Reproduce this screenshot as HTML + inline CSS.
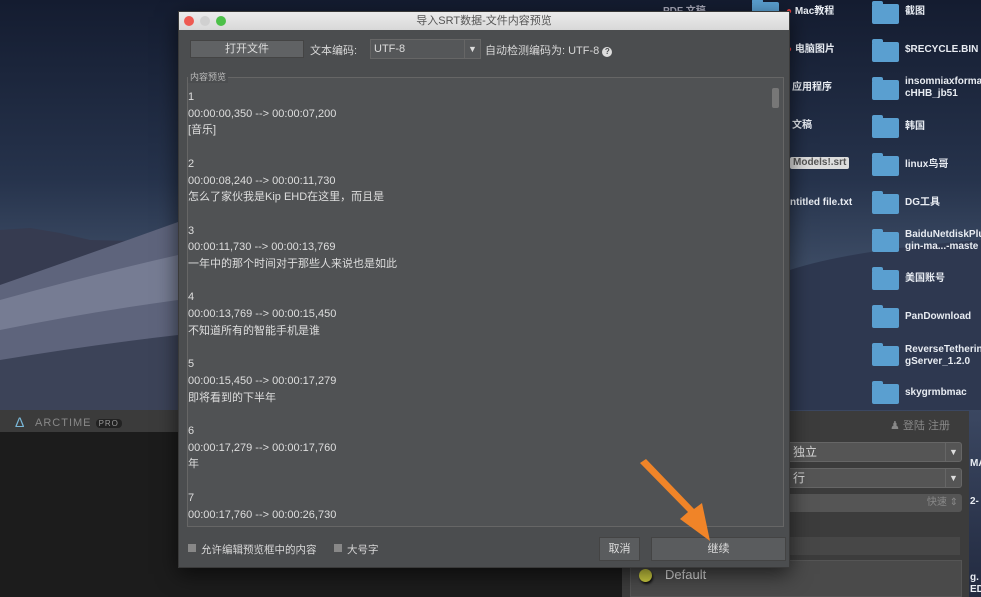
<!DOCTYPE html>
<html><head><meta charset="utf-8"><style>
*{margin:0;padding:0;box-sizing:border-box}
body{width:981px;height:597px;overflow:hidden;position:relative;font-family:"Liberation Sans","Noto Sans CJK SC",sans-serif;background:#1b2338}
.abs{position:absolute}
.bg{left:0;top:0;width:981px;height:597px;background:linear-gradient(180deg,#141c30 0%,#26334c 30%,#45556e 50%,#3a4660 70%,#222a40 100%)}
.fold{width:27px;height:20px;background:#5a9fd0;border-radius:2px}
.fold:before{content:"";position:absolute;left:0;top:-3px;width:11px;height:4px;background:#5a9fd0;border-radius:2px 2px 0 0}
.lbl{color:#e8ecf2;font-size:10px;font-weight:bold;line-height:12px}
.dlg{left:178px;top:11px;width:612px;height:557px;background:#4b4d4f;border:1px solid #3a3a3a;box-shadow:0 6px 20px rgba(0,0,0,.6)}
.title{left:0;top:0;width:610px;height:18px;background:linear-gradient(#ececec,#d8d8d8);color:#555;font-size:11px;text-align:center;line-height:18px}
.dot{top:4px;width:10px;height:10px;border-radius:50%}
.txt{color:#d8d8d8;font-size:11px}
.content{left:8px;top:65px;width:597px;height:450px;background:#505254;border:1px solid #666}
.lines{left:0;top:11px;font-size:11px;line-height:16.7px;color:#dedede;padding-left:0}
.btn{background:#5a5c5e;border:1px solid #444;color:#ddd;font-size:11px;text-align:center}
</style></head><body>
<div class="abs bg"></div>
<svg class="abs" style="left:0;top:0" width="981" height="597">
<path d="M0 230 L30 228 L60 233 L90 240 L178 242 L178 410 L0 410Z" fill="#363b50"/>
<path d="M0 285 Q100 250 178 222 L178 410 L0 410Z" fill="#5e647c"/>
<path d="M0 300 Q90 275 178 255 L178 300 Q90 312 0 330Z" fill="#8a90a6" opacity=".55"/>
<path d="M0 360 Q90 345 178 335 L178 410 L0 410Z" fill="#2e3448" opacity=".7"/>
<path d="M790 270 Q850 250 981 240 L981 410 L790 410Z" fill="#2e3850"/>
</svg>
<div class="abs fold" style="left:872px;top:4px"></div><div class="abs lbl" style="left:905px;top:6px">截图</div>
<div class="abs fold" style="left:872px;top:42px"></div><div class="abs lbl" style="left:905px;top:44px">$RECYCLE.BIN</div>
<div class="abs fold" style="left:872px;top:80px"></div><div class="abs lbl" style="left:905px;top:76px">insomniaxforma<br>cHHB_jb51</div>
<div class="abs fold" style="left:872px;top:118px"></div><div class="abs lbl" style="left:905px;top:121px">韩国</div>
<div class="abs fold" style="left:872px;top:156px"></div><div class="abs lbl" style="left:905px;top:159px">linux鸟哥</div>
<div class="abs fold" style="left:872px;top:194px"></div><div class="abs lbl" style="left:905px;top:197px">DG工具</div>
<div class="abs fold" style="left:872px;top:232px"></div><div class="abs lbl" style="left:905px;top:229px">BaiduNetdiskPlu<br>gin-ma...-maste</div>
<div class="abs fold" style="left:872px;top:270px"></div><div class="abs lbl" style="left:905px;top:273px">美国账号</div>
<div class="abs fold" style="left:872px;top:308px"></div><div class="abs lbl" style="left:905px;top:311px">PanDownload</div>
<div class="abs fold" style="left:872px;top:346px"></div><div class="abs lbl" style="left:905px;top:344px">ReverseTetherin<br>gServer_1.2.0</div>
<div class="abs fold" style="left:872px;top:384px"></div><div class="abs lbl" style="left:905px;top:387px">skygrmbmac</div>
<div class="abs fold" style="left:752px;top:2px;height:12px"></div>
<div class="abs lbl" style="left:786px;top:6px"><span style="color:#e04040">●</span> Mac教程</div>
<div class="abs lbl" style="left:786px;top:44px"><span style="color:#e04040">●</span> 电脑图片</div>
<div class="abs lbl" style="left:792px;top:82px">应用程序</div>
<div class="abs lbl" style="left:792px;top:120px">文稿</div>
<div class="abs lbl" style="left:790px;top:157px;background:#ddd;color:#555;padding:0 3px;border-radius:2px">Models!.srt</div>
<div class="abs lbl" style="left:790px;top:197px">ntitled file.txt</div>
<div class="abs lbl" style="left:663px;top:6px;color:#aab">PDF 文稿</div>
<div class="abs" style="left:0;top:410px;width:180px;height:22px;background:#3b3b3b"></div>
<div class="abs" style="left:15px;top:414px;color:#7ab8d8;font-size:14px">Δ</div>
<div class="abs" style="left:35px;top:417px;color:#888;font-size:11px;letter-spacing:1px">ARCTIME <span style="background:#222;color:#999;font-size:8px;padding:0 3px;border-radius:4px">PRO</span></div>
<div class="abs" style="left:0;top:432px;width:625px;height:165px;background:#1c1c1c"></div>
<div class="abs" style="left:622px;top:411px;width:347px;height:186px;background:#3c3c3c"></div>
<div class="abs" style="left:890px;top:417px;color:#888;font-size:11px">♟ 登陆 注册</div>
<div class="abs" style="left:780px;top:442px;width:182px;height:20px;background:#555;border:1px solid #666;border-radius:3px;color:#ddd;font-size:12px;padding-left:12px;line-height:18px">独立<span style="float:right;width:16px;border-left:1px solid #666;text-align:center;font-size:9px">▼</span></div>
<div class="abs" style="left:780px;top:468px;width:182px;height:20px;background:#555;border:1px solid #666;border-radius:3px;color:#ddd;font-size:12px;padding-left:12px;line-height:18px">行<span style="float:right;width:16px;border-left:1px solid #666;text-align:center;font-size:9px">▼</span></div>
<div class="abs" style="left:780px;top:494px;width:182px;height:18px;background:#555;border-radius:3px;color:#888;font-size:10px;text-align:right;padding-right:4px;line-height:18px">快速 ⇕</div>
<div class="abs" style="left:790px;top:537px;width:170px;height:18px;background:#474747"></div>
<div class="abs" style="left:630px;top:560px;width:332px;height:37px;background:#4a4a4a;border:1px solid #555"></div>
<div class="abs" style="left:639px;top:569px;width:13px;height:13px;border-radius:50%;background:#cccc40;box-shadow:1px 2px 2px #111"></div>
<div class="abs" style="left:665px;top:567px;color:#ddd;font-size:13px">Default</div>
<div class="abs lbl" style="left:970px;top:458px">MA</div>
<div class="abs lbl" style="left:970px;top:496px">2-</div>
<div class="abs lbl" style="left:970px;top:572px">g.<br>ED</div>
<div class="abs dlg">
 <div class="abs title">导入SRT数据-文件内容预览</div>
 <div class="abs dot" style="left:5px;background:#ee5a52"></div>
 <div class="abs dot" style="left:21px;background:#d0d0d0"></div>
 <div class="abs dot" style="left:37px;background:#4cc048"></div>
 <div class="abs btn" style="left:11px;top:28px;width:114px;height:18px;line-height:16px;background:#606264">打开文件</div>
 <div class="abs txt" style="left:131px;top:30px">文本编码:</div>
 <div class="abs" style="left:191px;top:27px;width:111px;height:20px;background:#555759;border:1px solid #666;color:#ddd;font-size:11px;line-height:18px;padding-left:3px">UTF-8<span style="float:right;width:16px;border-left:1px solid #666;text-align:center;font-size:9px">▼</span></div>
 <div class="abs txt" style="left:306px;top:30px">自动检测编码为: UTF-8 <span style="display:inline-block;width:10px;height:10px;border-radius:50%;background:#ddd;color:#4b4d4f;font-size:8px;text-align:center;line-height:10px;font-weight:bold">?</span></div>
 <div class="abs content">
  <div class="abs" style="left:0;top:-8px;background:#4b4d4f;color:#bbb;font-size:9px;padding:0 2px">内容预览</div>
  <div class="abs lines">1<br>00:00:00,350 --&gt; 00:00:07,200<br>[音乐]<br><br>2<br>00:00:08,240 --&gt; 00:00:11,730<br>怎么了家伙我是Kip EHD在这里，而且是<br><br>3<br>00:00:11,730 --&gt; 00:00:13,769<br>一年中的那个时间对于那些人来说也是如此<br><br>4<br>00:00:13,769 --&gt; 00:00:15,450<br>不知道所有的智能手机是谁<br><br>5<br>00:00:15,450 --&gt; 00:00:17,279<br>即将看到的下半年<br><br>6<br>00:00:17,279 --&gt; 00:00:17,760<br>年<br><br>7<br>00:00:17,760 --&gt; 00:00:26,730</div>
  <div class="abs" style="left:584px;top:10px;width:7px;height:20px;background:#777;border-radius:2px"></div>
 </div>
 <div class="abs" style="left:9px;top:532px;width:8px;height:8px;background:#888"></div>
 <div class="abs txt" style="left:22px;top:530px;font-size:10.5px">允许编辑预览框中的内容</div>
 <div class="abs" style="left:155px;top:532px;width:8px;height:8px;background:#888"></div>
 <div class="abs txt" style="left:168px;top:530px;font-size:10.5px">大号字</div>
 <div class="abs btn" style="left:420px;top:525px;width:41px;height:24px;line-height:22px">取消</div>
 <div class="abs btn" style="left:472px;top:525px;width:135px;height:24px;line-height:22px">继续</div>
</div>
<svg class="abs" style="left:630px;top:455px" width="100" height="95">
<path d="M10 8 L58 57 L50 64 L80 86 L72 48 L64 54 L16 4Z" fill="#f08428"/>
</svg>
</body></html>
